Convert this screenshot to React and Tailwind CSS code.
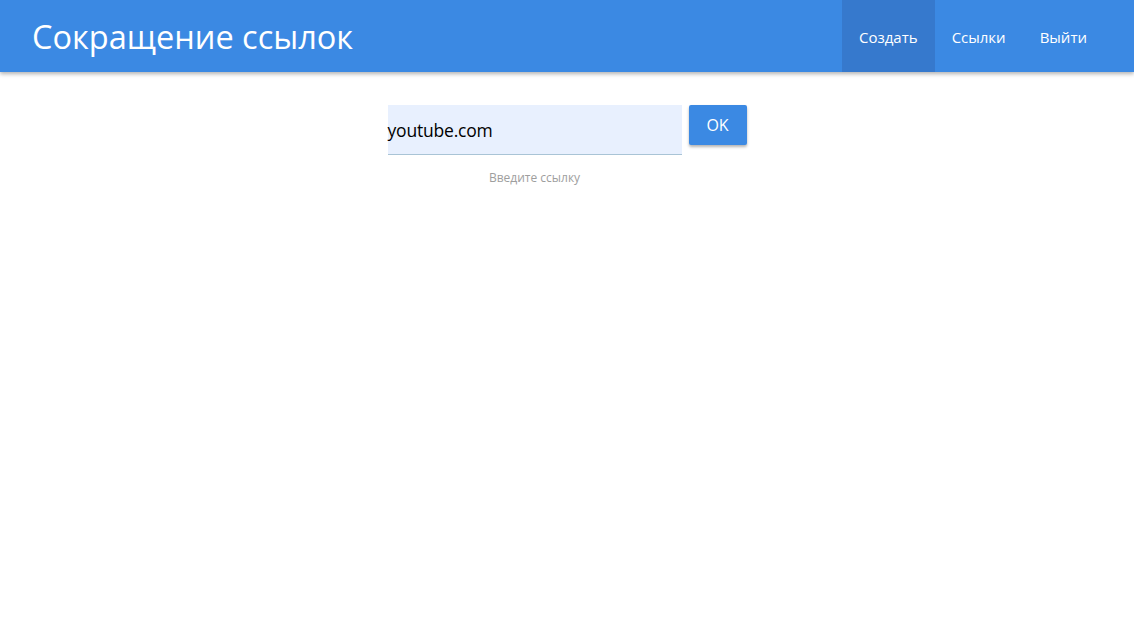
export default function App() {
  const font = { fontFamily: '"Open Sans", "Noto Sans", sans-serif' };
  return (
    <div className="min-h-[620px] bg-white" style={font}>
      <nav className="h-[72px] bg-[#3b89e3] flex items-center justify-between shadow-[0_2px_4px_rgba(0,0,0,0.3)] relative z-10">
        <div className="pl-8 pt-[2px] text-white text-[32.5px] tracking-[0px] leading-none">Сокращение ссылок</div>
        <ul className="flex h-full pr-[30px] text-white text-[15px]">
          <li className="h-full flex items-center pt-[2px] px-[17px] bg-[#3679cd]">Создать</li>
          <li className="h-full flex items-center pt-[2px] px-[17px]">Ссылки</li>
          <li className="h-full flex items-center pt-[2px] px-[17px]">Выйти</li>
        </ul>
      </nav>
      <div className="flex justify-center pt-[33px]">
        <div className="flex items-start gap-[7px]">
          <div className="flex flex-col items-center">
            <div className="w-[294px] h-[50px] bg-[#e8f0fe] border-b border-[#a9c4d6] flex items-center pt-[2px] text-[17.5px] text-black tracking-[-0.2px]">
              youtube.com
            </div>
            <div className="mt-[14px] text-[12px] text-[#9e9e9e]">Введите ссылку</div>
          </div>
          <button className="w-[58px] h-[40px] bg-[#3b89e3] text-white text-[16px] rounded-[2px] shadow-[0_2px_3px_rgba(0,0,0,0.3)]">
            OK
          </button>
        </div>
      </div>
    </div>
  );
}
